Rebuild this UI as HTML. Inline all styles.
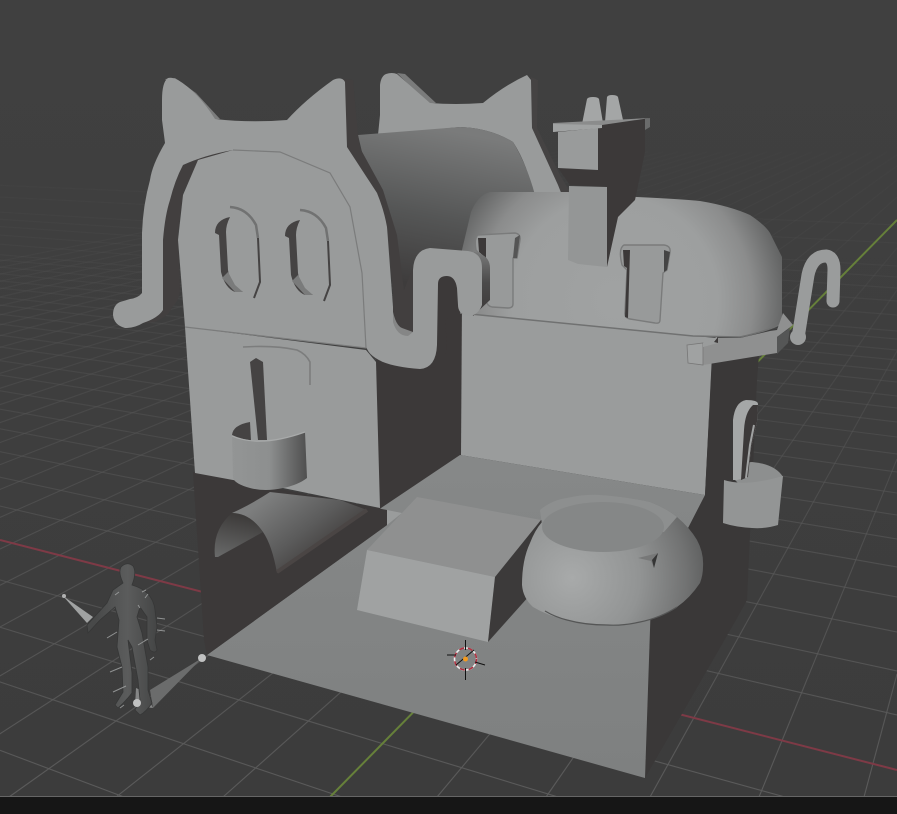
<!DOCTYPE html>
<html><head><meta charset="utf-8"><style>html,body{margin:0;padding:0;width:897px;height:814px;overflow:hidden;background:#3d3d3d}svg{display:block;position:absolute;left:0;top:0}</style></head><body>
<svg width="897" height="814" viewBox="0 0 897 814" xmlns="http://www.w3.org/2000/svg">
<defs>
<linearGradient id="bg" x1="0" y1="0" x2="0" y2="1"><stop offset="0" stop-color="#404040"/><stop offset="1" stop-color="#3c3c3c"/></linearGradient>
<linearGradient id="gf" gradientUnits="userSpaceOnUse" x1="0" y1="110" x2="0" y2="800"><stop offset="0" stop-color="#555" stop-opacity="0"/><stop offset=".25" stop-color="#555" stop-opacity=".25"/><stop offset=".6" stop-color="#575757" stop-opacity=".65"/><stop offset="1" stop-color="#5b5b5b" stop-opacity="1"/></linearGradient>
<linearGradient id="barrel" gradientUnits="userSpaceOnUse" x1="445" y1="130" x2="415" y2="285"><stop offset="0" stop-color="#7a7b7b"/><stop offset=".55" stop-color="#555656"/><stop offset="1" stop-color="#3e3c3c"/></linearGradient>
<radialGradient id="dome" gradientUnits="userSpaceOnUse" cx="615" cy="300" r="172"><stop offset="0" stop-color="#a0a2a2"/><stop offset=".6" stop-color="#9d9f9f"/><stop offset=".8" stop-color="#8b8c8c"/><stop offset="1" stop-color="#626363"/></radialGradient>
<radialGradient id="pot" gradientUnits="userSpaceOnUse" cx="572" cy="578" r="135"><stop offset="0" stop-color="#a8aaaa"/><stop offset=".5" stop-color="#929494"/><stop offset=".85" stop-color="#717272"/><stop offset="1" stop-color="#5f6060"/></radialGradient>
<linearGradient id="buck" x1="0" y1="0" x2="1" y2="0"><stop offset="0" stop-color="#939595"/><stop offset=".5" stop-color="#8d8f8f"/><stop offset="1" stop-color="#4f4f4f"/></linearGradient>
<linearGradient id="pipe" gradientUnits="userSpaceOnUse" x1="270" y1="495" x2="320" y2="560"><stop offset="0" stop-color="#7d7e7e"/><stop offset=".6" stop-color="#5b5b5b"/><stop offset="1" stop-color="#423f3e"/></linearGradient>
<linearGradient id="pipe2" gradientUnits="userSpaceOnUse" x1="235" y1="515" x2="225" y2="560"><stop offset="0" stop-color="#3e3c3b"/><stop offset="1" stop-color="#6a6b6b"/></linearGradient>
<linearGradient id="hookd" gradientUnits="userSpaceOnUse" x1="0" y1="255" x2="0" y2="310"><stop offset="0" stop-color="#747575"/><stop offset=".5" stop-color="#4b4a4a"/><stop offset="1" stop-color="#3e3c3c"/></linearGradient>
<linearGradient id="floor" gradientUnits="userSpaceOnUse" x1="0" y1="460" x2="0" y2="780"><stop offset="0" stop-color="#868888"/><stop offset="1" stop-color="#7e8080"/></linearGradient>
<linearGradient id="body" gradientUnits="userSpaceOnUse" x1="95" y1="0" x2="160" y2="0"><stop offset="0" stop-color="#484949"/><stop offset=".5" stop-color="#5b5c5c"/><stop offset="1" stop-color="#424343"/></linearGradient>
</defs>
<rect width="897" height="814" fill="url(#bg)"/>
<g fill="none" stroke="url(#gf)" stroke-width="1.1">
<path d="M437 797L897 248M546 797L897 290M650 797L897 351M759 797L897 459M864 797L897 674M223 797L897 197M116 797L897 180M9 797L897 166M-98 797L897 155M-205 797L887 152M-312 797L872 152M-419 797L857 152M-526 797L842 152M-633 797L827 152M-740 797L812 152M-847 797L797 152M-954 797L782 152M-1061 797L767 152M-1168 797L752 152M-1275 797L737 152M-1382 797L722 152M-1489 797L707 152M-1596 797L693 152M-1703 797L678 152M-1810 797L663 152M-1917 797L648 152M-2024 797L633 152M-2131 797L618 152M-2238 797L603 152M-2345 797L588 152M-2452 797L573 152M-2559 797L558 152M-2666 797L543 152"/>
<path d="M-1700 110L785 797M-1700 110L558 797M-1700 110L342 797M-1700 110L124 797M-1700 110L897 715M-1700 110L897 671M-1700 110L897 632M-1700 110L897 597M-1700 110L897 567M-1700 110L897 539M-1700 110L897 515M-1700 110L897 493M-1700 110L897 472M-1700 110L897 454M-1700 110L897 437M-1700 110L897 422M-1700 110L897 408M-1700 110L897 396M-1700 110L897 382M-1700 110L897 371M-1700 110L897 360M-1700 110L897 350M-1700 110L897 339M-1700 110L897 331M-1700 110L897 315M-1700 110L897 301M-1700 110L897 288M-1700 110L897 277M-1700 110L897 266M-1700 110L897 243M-1700 110L897 225"/>
</g>
<path d="M0 540L897 770" stroke="#7e3a46" stroke-width="2" fill="none"/>
<path d="M330 797L897 220" stroke="#66803a" stroke-width="2" fill="none"/>

<!-- back head -->
<polygon points="531,77 538,80 537,128 560,175 570,192 555,192 532,130" fill="#454343"/>
<polygon points="397,73 405,74 436,103 428,104" fill="#7a7b7b"/>
<path d="M380 85Q381 76 386 74Q392 72 397 74L430 103Q455 105 483 103Q505 85 527 75L531 80L532 128L558 185L562 195H533Q528 165 513 142Q490 128 460 127L378 135L380 115Z" fill="#999b9b"/>
<!-- barrel -->
<path d="M358 135L460 127Q490 128 513 142Q527 165 535 195L480 225L465 250L460 310L405 335Z" fill="url(#barrel)"/>

<!-- interior and walls -->
<polygon points="460,313 716,338 712,360 705,495 460,455" fill="#9a9c9c"/>
<polygon points="376,345 462,300 461,455 378,510" fill="#3c3939"/>
<polygon points="712,355 759,355 757,380 747,600 736,620 645,778 651,600 705,495" fill="#3a3838"/>
<polygon points="207,655 645,778 651,600 705,495 460,455 378,510 387,525" fill="url(#floor)"/>
<polygon points="193,472 387,510 387,525 207,655 204,640" fill="#3c3939"/>
<polygon points="387,510 402,513 387,525" fill="#9a9c9c"/>
<polygon points="185,327 366,350 376,362 380,508 283,488 233,480 195,473" fill="#999b9b"/>

<!-- half pipe -->
<path d="M232 513Q250 505 270 492L340 500L367 510L277 573Q272 545 263 532Q250 515 232 513Z" fill="url(#pipe)"/>
<path d="M215 557Q212 530 232 513Q250 513 263 532L218 557Z" fill="url(#pipe2)"/>
<path d="M277 572L367 510" stroke="#4a4544" stroke-width="4" fill="none"/>

<!-- slot and bucket -->
<path d="M243 347Q275 345 297 350Q306 354 310 362L310 385" fill="none" stroke="#7c7d7d" stroke-width="1.6"/>
<polygon points="250,362 256,358 263,362 267,440 258,440" fill="#454343"/>
<path d="M232 435Q233 425 250 422L251 441Q240 440 232 435Z" fill="#454343"/>
<path d="M232 435Q260 448 305 432L307 478Q298 485 283 488Q265 492 250 488Q235 484 233 478Z" fill="url(#buck)"/>
<path d="M232 436Q260 448 305 432" fill="none" stroke="#a8aaaa" stroke-width="1.2"/>

<!-- table block -->
<polygon points="417,497 541,520 495,577 367,550" fill="#8f9090"/>
<polygon points="367,550 495,577 488,642 357,610" fill="#a0a2a2"/>
<polygon points="495,577 541,520 565,525 530,595 488,642" fill="#3c3a3a"/>

<!-- pot -->
<path d="M522 585Q522 560 530 543Q535 530 542 522L540 510Q552 500 567 498Q585 494 600 495Q628 497 650 502Q666 508 677 517Q690 528 697 540Q704 553 703 567Q703 575 700 583Q690 598 677 607Q660 618 640 622Q622 626 607 625Q585 625 567 620Q548 616 533 607Q523 598 522 585Z" fill="url(#pot)"/>
<path d="M545 611Q555 617 567 620Q585 625 607 625Q622 626 640 622Q660 618 677 607" fill="none" stroke="#555656" stroke-width="1.2"/>
<path d="M540 510Q552 500 567 498Q585 494 600 495Q628 497 650 502Q666 508 677 517L664 532H543Z" fill="#8d8f8f"/>
<ellipse cx="603" cy="527" rx="61" ry="25" fill="#858787"/>
<polygon points="638,558 658,553 654,568 651,561" fill="#777878"/>
<polygon points="658,553 654,568 652,560" fill="#353535"/>

<!-- right bucket -->
<path d="M733 478Q740 462 752 462Q775 464 783 477L745 490Z" fill="#8d8f8f"/>
<path d="M733 480L733 420Q735 402 746 400Q758 400 758 404L757 422L751 448L748 477L737 480Z" fill="#a5a7a7"/>
<path d="M741 480L744 430Q745 412 753 405L758 405L757 422L751 448L748 477Z" fill="#3c3939"/>
<path d="M746 478L750 445L754 425" fill="none" stroke="#a0a2a2" stroke-width="2"/>
<path d="M724 480Q745 487 783 476L778 525Q765 529 752 528Q735 527 723 523Z" fill="#939595"/>

<!-- dome -->
<path d="M462 250L471 212Q478 195 490 192L568 192L637 197Q680 199 700 201Q730 206 750 215Q765 225 770 233L782 257V323Q772 330 740 337L693 336L460 313Z" fill="url(#dome)"/>
<path d="M460 313L693 336 740 337Q772 330 782 323" fill="none" stroke="#707171" stroke-width="1.5"/>
<!-- roof window 1 -->
<path d="M478 235L515 233Q521 234 520 240L517 258H513V304Q513 308 508 308L492 307Q487 306 486 300L483 258L476 250Q474 238 478 235Z" fill="#989a9a" stroke="#7a7b7b" stroke-width="1.4" stroke-linejoin="round"/>
<polygon points="478,238 486,238 486,258 479,252" fill="#3c3939"/>
<polygon points="515,238 520,235 517,258 513,258" fill="#555"/>
<!-- roof window 2 -->
<path d="M624 245L664 245Q671 246 670 252L667 270L663 273L660 320Q660 324 655 323L630 319Q624 318 625 312L627 270L622 265Q618 248 624 245Z" fill="#989a9a" stroke="#7a7b7b" stroke-width="1.4" stroke-linejoin="round"/>
<polygon points="623,250 630,250 628,318 625,317 627,268 624,266" fill="#3c3939"/>
<polygon points="664,250 670,252 667,270 664,272" fill="#444"/>

<!-- chimney -->
<path d="M582 124L587 99Q588 97 593 97Q598 97 599 99L603 123Z" fill="#a4a6a6"/>
<path d="M605 122L607 97Q608 95 612 95Q617 95 618 97L623 120Z" fill="#a4a6a6"/>
<polygon points="558,168 598,170 598,127 602,125 645,119 645,152 635,200 618,217 607,267 607,187 570,185" fill="#3c3939"/>
<polygon points="558,132 598,128 598,170 558,168" fill="#999b9b"/>
<polygon points="553,123 650,118 602,125 553,132" fill="#8b8c8c"/>
<polygon points="553,124 602,125 602,128 553,132" fill="#a0a2a2"/>
<polygon points="645,119 650,118 650,127 645,130" fill="#6a6b6b"/>
<polygon points="569,186 607,187 607,267 578,264 568,260" fill="#949696"/>

<!-- ledge -->
<polygon points="703,347 717,338 740,338 770,331 777,330 783,313 793,325 777,337 777,353 703,365" fill="#8f9090"/>
<polygon points="777,337 790,328 788,343 777,354" fill="#555656"/>
<polygon points="687,345 703,343 703,365 688,363" fill="#a0a2a2" stroke="#777" stroke-width=".8"/>
<polygon points="703,343 717,337 718,343 703,347" fill="#9a9c9c"/>
<polygon points="714,342 718,337 718,343" fill="#3c3939"/>
<path d="M798 338L808 275Q812 256 826 256Q834 257 834 270L833 301" fill="none" stroke="#9a9c9c" stroke-width="13" stroke-linecap="round"/>
<circle cx="798" cy="337" r="8" fill="#9a9c9c"/>

<!-- dark rear depth of front head -->
<polygon points="343,79 353,80 358,135 360,148 383,190 397,235 404,290 413,267 413,332 400,337 393,322 393,290 387,227 377,193 347,147" fill="#423f3f"/>
<path d="M391 300Q394 325 402 328L413 332V337L400 337Q392 332 391 320Z" fill="#858686"/>
<path d="M474 252Q490 255 490 268V300L473 316L470 300Z" fill="url(#hookd)"/>
<path d="M438 284Q438 276 447 276Q455 276 457 288L458 310L445 320L447 345Q447 360 435 367L423 369Q436 368 437 345Z" fill="#3c3939"/>
<path d="M233 150Q205 155 183 165Q175 180 170 200Q165 215 163 240V310Q158 318 143 323L155 322Q170 315 172 307Q180 300 180 287L178 233L183 193L198 162Z" fill="#423f3f"/>
<polygon points="165,79 175,78 196,93 220,119 208,120" fill="#7c7d7d"/>
<!-- front head ribbon -->
<path d="M162 100Q162 82 168 78Q172 77 178 80Q198 92 215 119Q250 123 287 120Q305 100 333 80Q342 76 345 82L347 147Q362 170 377 193Q384 210 387 227L393 307V322Q397 336 408 336L413 332V270Q414 250 430 248L468 251Q482 253 482 268V305Q478 316 468 316Q458 314 458 305L457 288Q455 276 447 276Q438 276 438 284L437 345Q436 368 420 369Q395 367 383 362Q367 355 366 345L362 273L350 207L330 173L280 152L233 150Q205 155 183 165Q175 180 170 200Q165 215 163 240V310Q158 318 143 323Q135 328 125 328Q114 325 113 315Q113 305 120 302L130 299Q138 298 142 293V233Q143 205 150 180Q152 165 165 143Q164 135 162 120Z" fill="#999b9b"/>
<!-- arch face -->
<path d="M233 150L280 152L330 173L350 207L362 273L366 348L185 327L178 240L183 195L198 160Z" fill="#999b9b"/>
<path d="M233 150L280 152L330 173L350 207L362 273L366 348L185 327" fill="none" stroke="#7b7c7c" stroke-width="1.2"/>
<!-- eyes -->
<g>
<path d="M230 207Q247 208 256 225L258 238" fill="none" stroke="#717272" stroke-width="2.5"/>
<path d="M258 238L259 260 260 282 254 298" fill="none" stroke="#454343" stroke-width="2"/>
<path d="M215 233Q215 220 230 217Q226 225 226 232L228 270Q230 285 243 292L235 292Q225 288 221 272L219 235Z" fill="#454343"/>
<polygon points="222,278 228,272 235,285 243,292 235,292" fill="#7a7b7b"/>
</g>
<g transform="translate(70,3)">
<path d="M230 207Q247 208 256 225L258 238" fill="none" stroke="#717272" stroke-width="2.5"/>
<path d="M258 238L259 260 260 282 254 298" fill="none" stroke="#454343" stroke-width="2"/>
<path d="M215 233Q215 220 230 217Q226 225 226 232L228 270Q230 285 243 292L235 292Q225 288 221 272L219 235Z" fill="#454343"/>
<polygon points="222,278 228,272 235,285 243,292 235,292" fill="#7a7b7b"/>
</g>

<!-- figure -->
<polygon points="63,596 93,617 87,623" fill="#a0a2a2"/>
<polygon points="202,658 150,690 153,708" fill="#6b6c6c"/>
<polygon points="136,688 145,692 153,708 135,706" fill="#858686"/>
<path d="M123 583Q118 572 121 567Q127 561 133 566Q137 572 132 585Q142 588 147 593Q154 600 155 610L157 627L155 640L157 650Q155 654 150 650L147 640V617L140 607L137 617L142 633L148 667V690L152 703Q146 712 140 715L135 710L140 700L138 680L132 647L128 640L132 673V693Q125 702 118 708L115 705L123 692L122 667L117 647L119 620L115 607L100 620L88 633L87 625L107 603L113 590Z" fill="url(#body)" stroke="#363737" stroke-width=".8"/>
<g stroke="#a5a7a7" stroke-width="1" fill="none" opacity=".8">
<path d="M110 672l12 -5M113 692l13 -6M107 638l10 -6M138 645l10 -6M157 618l8 1M157 630l8 1M115 595l4 -3M146 590l-4 2M138 605l2 3M150 660l4 -3M120 708l4 -3M145 598l3 -4"/>
</g>
<circle cx="202" cy="658" r="4" fill="#c0c1c1"/>
<circle cx="137" cy="703" r="4" fill="#c0c1c1"/>
<circle cx="64" cy="596" r="2" fill="#b0b1b1"/>

<!-- 3d cursor -->
<circle cx="465.5" cy="659" r="11" fill="none" stroke="#eee" stroke-width="1.6"/>
<circle cx="465.5" cy="659" r="11" fill="none" stroke="#b03040" stroke-width="1.6" stroke-dasharray="5 4"/>
<path d="M465.5 640V650M465.5 668V680M447 655H456M475 662L485 665M456 665L474 650" stroke="#111" stroke-width="1" fill="none"/>
<circle cx="465.5" cy="659" r="2.5" fill="#f39a20"/>

<rect x="0" y="796" width="897" height="1" fill="#666"/>
<rect x="0" y="797" width="897" height="17" fill="#161616"/>
</svg>
</body></html>
